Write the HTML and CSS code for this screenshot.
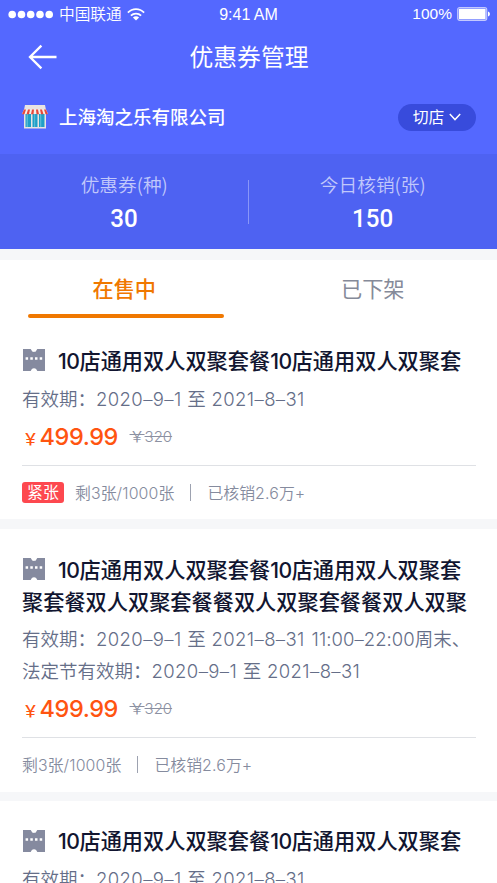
FILE: index.html
```html
<!DOCTYPE html>
<html lang="zh-CN">
<head>
<meta charset="utf-8">
<title>优惠券管理</title>
<link rel="stylesheet" href="styles.css">
</head>
<body>
<svg class="defs" width="0" height="0" aria-hidden="true">
  <symbol id="ticket" viewBox="0 0 22 22">
    <path fill="#858a9f" d="M0 0H7.700C8 .5 8.400 1 8.800 1.700C9.400 3.300 12.600 3.300 13.200 1.700C13.600 1 14 .5 14.300 0H22V22H14.300C14 21.400 13.800 20.800 13.300 20.200C12.300 18.800 9.700 18.800 8.700 20.200C8.200 20.800 8 21.400 7.700 22H0Z"/>
    <path fill="#fff" d="M2.600 8.200h2.500v2.500H2.600zM7.300 8.200h2.500v2.500H7.300zM12 8.200h2.500v2.500H12zM16.700 8.200h2.500v2.500h-2.500z"/>
  </symbol>
</svg>
<header class="header">
  <div class="status">
    <div class="carrier">
      <svg class="signal" width="45" height="9" viewBox="0 0 45 9" fill="#fff"><circle cx="4.200" cy="4.500" r="3.800"/><circle cx="13.500" cy="4.500" r="3.800"/><circle cx="22.700" cy="4.500" r="3.800"/><circle cx="32" cy="4.500" r="3.800"/><circle cx="41.200" cy="4.500" r="3.800"/></svg>
      <span class="carrier-name">中国联通</span>
      <svg class="wifi" width="18" height="13" viewBox="0 0 18 13"><g fill="none" stroke="#fff" stroke-width="1.800"><path d="M.9 4.600C5.400-.1 12.600-.1 17.100 4.600"/><path d="M3.900 7.700C6.700 4.800 11.300 4.800 14.100 7.700"/></g><path fill="#fff" d="M5.900 9.400C7.700 7.800 10.300 7.800 12.100 9.400L9 12.500Z"/></svg>
    </div>
    <span class="clock">9:41 AM</span>
    <div class="power"><span>100%</span>
      <svg width="33" height="14" viewBox="0 0 33 14"><rect x=".7" y=".7" width="29" height="12.600" rx="2" fill="none" stroke="#c3c9ff" stroke-width="1.200"/><rect x="1.800" y="1.800" width="26.800" height="10.400" rx=".7" fill="#fff"/><path d="M31 4.500c1.400.5 1.900 1.300 1.900 2.500s-.5 2-1.900 2.500z" fill="#fff"/></svg>
    </div>
  </div>
  <div class="nav">
    <svg class="back" width="29" height="26" viewBox="0 0 29 26" fill="none" stroke="#fff" stroke-width="2.300"><path d="M13.400 1.600 2 13l11.400 11.400M2 13h26.500"/></svg>
    <h1 class="page-title">优惠券管理</h1>
  </div>
  <div class="store">
    <svg class="shop" width="26" height="24" viewBox="0 0 26 24">
      <path fill="#e8e4e2" d="M3 0h20l1 5H2zM2 9h22v14.500H2z"/>
      <path fill="#1f9fc7" d="M3.500 9H9v13H3.500zM10.500 9h5v13h-5zM17 9h5.500v13H17z"/>
      <path fill="#55b8d6" d="M4.500 9H6v13H4.500zM12 9h1.200v13H12zM18 9h1.300v13H18z"/>
      <path fill="#f5eeea" d="M2 4.500h22l2 4.500H0z"/>
      <path fill="#e5493b" d="M2 4.500h2L2.500 9.300H0zM6 4.500h2L7 9.300H4.500zM10 4.500h2l-.5 4.800H9zM14 4.500h2l1 4.800h-2.500zM18 4.500h2l1.500 4.800H19zM22 4.500h2l2 4.800h-2.500z"/>
    </svg>
    <span class="store-name">上海淘之乐有限公司</span>
    <button class="switch"><span>切店</span><svg width="12" height="8" viewBox="0 0 12 8" fill="none" stroke="#fff" stroke-width="1.400"><path d="M.8 1 6 6.600 11.200 1"/></svg></button>
  </div>
  <div class="stats">
    <div class="stat"><span class="stat-label">优惠券(种)</span><span class="stat-value">30</span></div>
    <div class="stat"><span class="stat-label">今日核销(张)</span><span class="stat-value">150</span></div>
  </div>
</header>
<main>
  <nav class="tabs">
    <a class="tab active">在售中</a>
    <a class="tab">已下架</a>
  </nav>
  <section class="card first">
    <h2 class="title"><svg class="ticket"><use href="#ticket"/></svg><span class="n">10</span>店通用双人双聚套餐<span class="n">10</span>店通用双人双聚套</h2>
    <p class="date">有效期：<span class="n">2020–9–1</span> 至 <span class="n">2021–8–31</span></p>
    <div class="price"><span class="yen">￥</span><span class="amount">499.99</span><span class="old"><span class="old-yen">￥</span>320</span></div>
    <div class="foot"><span class="tag">紧张</span><span>剩<span class="n">3</span>张<span class="n">/1000</span>张</span><i class="bar"></i><span>已核销<span class="n">2.6</span>万<span class="n">+</span></span></div>
  </section>
  <section class="card second">
    <h2 class="title"><svg class="ticket"><use href="#ticket"/></svg><span class="n">10</span>店通用双人双聚套餐<span class="n">10</span>店通用双人双聚套<br>聚套餐双人双聚套餐餐双人双聚套餐餐双人双聚</h2>
    <p class="date">有效期：<span class="n">2020–9–1</span> 至 <span class="n">2021–8–31</span><span class="n time"> 11:00–22:00</span>周末、<br>法定节有效期：<span class="n">2020–9–1</span> 至 <span class="n">2021–8–31</span></p>
    <div class="price"><span class="yen">￥</span><span class="amount">499.99</span><span class="old"><span class="old-yen">￥</span>320</span></div>
    <div class="foot"><span>剩<span class="n">3</span>张<span class="n">/1000</span>张</span><i class="bar"></i><span>已核销<span class="n">2.6</span>万<span class="n">+</span></span></div>
  </section>
  <section class="card third">
    <h2 class="title"><svg class="ticket"><use href="#ticket"/></svg><span class="n">10</span>店通用双人双聚套餐<span class="n">10</span>店通用双人双聚套</h2>
    <p class="date">有效期：<span class="n">2020–9–1</span> 至 <span class="n">2021–8–31</span></p>
  </section>
</main>
</body>
</html>
```
FILE: styles.css
```css
* { box-sizing: border-box; margin: 0; padding: 0; }
html, body { height: 883px; overflow: hidden; }
body { background: #f6f7f9; font-family: "Noto Sans CJK SC", sans-serif; color: #111530; white-space: nowrap; }
svg { display: block; flex: none; }
.defs { position: absolute; }
.header { height: 249px; background: #5468ff; color: #fff; }
.status { height: 28px; display: grid; grid-template-columns: 1fr auto 1fr; align-items: center; padding: 0 7px 0 8px; font-family: "Liberation Sans", sans-serif; font-size: 15.500px; }
.carrier { display: flex; align-items: center; }
.carrier-name { font: 350 15.700px/28px "Noto Sans CJK SC", sans-serif; margin-left: 6px; }
.wifi { margin-left: 5px; }
.clock { font-size: 16px; margin-left: -1px; padding-top: 1px; }
.power { display: flex; justify-content: flex-end; align-items: center; gap: 5px; }
.nav { height: 58px; display: grid; grid-template-columns: 60px 1fr 60px; align-items: center; }
.back { margin-left: 28px; }
.page-title { font-size: 23.800px; font-weight: 400; line-height: 56px; height: 58px; text-align: center; padding-left: 1px; }
.store { height: 68px; display: flex; align-items: center; padding: 0 21px 6px 22px; }
.store-name { margin: -2px 0 0 11px; font-size: 18.500px; font-weight: 500; }
.switch { margin-left: auto; width: 78px; height: 27px; border: 0; border-radius: 14px; background: #384bdc; color: #fff; display: flex; justify-content: center; align-items: center; gap: 5px; font: 400 15.800px/25px "Noto Sans CJK SC", sans-serif; }
.switch span { height: 27px; }
.stats { height: 95px; display: grid; grid-template-columns: 1fr 1fr; background: #4e62f2; position: relative; }
.stats::after { content: ""; position: absolute; left: 248px; top: 26px; width: 1px; height: 44px; background: #8996f8; }
.stat { display: flex; flex-direction: column; align-items: center; padding-top: 15px; }
.stat-label { font-size: 18.700px; font-weight: 350; line-height: 30px; color: #c1c8fb; }
.stat-value { font: 500 26.500px/38px Roboto, sans-serif; transform: scaleX(.91); }
.tabs { margin-top: 11px; height: 60px; background: #fff; display: grid; grid-template-columns: 1fr 1fr; }
.tab { display: flex; flex-direction: column; align-items: center; font-size: 21.200px; line-height: 56px; color: #858a99; }
.active { color: #f07800; font-weight: 500; }
.active::after { content: ""; width: 196px; height: 4px; border-radius: 2px; background: #f07800; margin: -2px 0 0 4px; }
.card { background: #fff; padding: 24px 21px 0 22px; margin-bottom: 10px; }
.first { height: 199px; }
.second { height: 263px; margin-bottom: 9px; }
.third { height: 120px; padding-top: 23px; }
.n { font-family: Inter, sans-serif; line-height: 0; }
.title { font-size: 21.200px; font-weight: 500; line-height: 32px; }
.title .n { letter-spacing: -.5px; }
.ticket { display: inline-block; width: 22px; height: 22px; margin: 0 13px 0 1px; vertical-align: -3px; }
.first .ticket, .second .ticket { vertical-align: -2px; }
.date { margin-top: 6px; font-size: 18.500px; font-weight: 350; line-height: 32px; color: #656e88; word-spacing: 1.500px; }
.second .date { margin-top: 5px; }
.date .n { letter-spacing: .4px; }
.date .time { letter-spacing: .05px; }
.price { display: flex; align-items: baseline; height: 51px; line-height: 46px; color: #ff5410; font-family: Inter, sans-serif; }
.yen { font: 500 16px/20px "Noto Sans CJK SC", sans-serif; width: 17.500px; padding-left: .5px; }
.amount { font-size: 23.500px; font-weight: 500; letter-spacing: -.4px; }
.old { font-size: 15px; line-height: 20px; color: #8c91a2; font-weight: 300; margin-left: 11.500px; padding-bottom: 1px; text-decoration: line-through; align-self: flex-start; margin-top: 13px; }
.old-yen { font-family: "Noto Sans CJK SC", sans-serif; font-weight: 350; line-height: 0; }
.foot { border-top: 1px solid #dfe1e5; height: 53px; display: flex; align-items: center; font-size: 15.900px; font-weight: 350; color: #858b9e; }
.foot .n { letter-spacing: .15px; }
.tag { background: #fd484f; color: #fff; border-radius: 3px; width: 42px; height: 21px; text-align: center; line-height: 20px; font-weight: 400; margin-right: 11px; }
.bar { width: 1px; height: 17px; background: #9da2b0; margin: 0 16px; }
```
